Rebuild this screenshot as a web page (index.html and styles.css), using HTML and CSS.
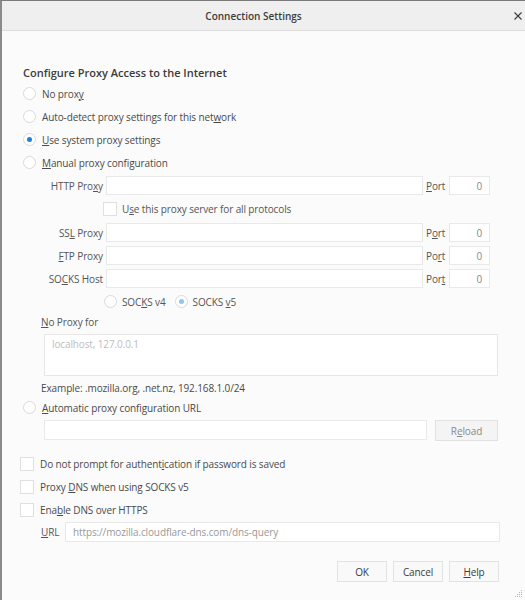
FILE: index.html
```html
<!DOCTYPE html>
<html>
<head>
<meta charset="utf-8">
<link rel="stylesheet" href="styles.css">
</head>
<body>
<div class="frame">
  <div class="titlebar">
    <span class="title">Connection Settings</span>
    <svg class="close" width="8" height="8" viewBox="0 0 8 8"><path d="M0.5 0.5L7.5 7.5M7.5 0.5L0.5 7.5" stroke="#3a3a3a" stroke-width="1.1"/></svg>
  </div>
  <div class="content">
    <div class="heading">Configure Proxy Access to the Internet</div>
    <div class="radio-row"><span class="radio"></span><span>No prox<u>y</u></span></div>
    <div class="radio-row"><span class="radio"></span><span>Auto-detect proxy settings for this net<u>w</u>ork</span></div>
    <div class="radio-row"><span class="radio checked"></span><span><u>U</u>se system proxy settings</span></div>
    <div class="radio-row"><span class="radio"></span><span><u>M</u>anual proxy configuration</span></div>

    <div class="proxy-grid">
      <span class="plabel">HTTP Pro<u>x</u>y</span><span class="input"></span><span class="portlabel"><u>P</u>ort</span><span class="input port">0</span>
      <div class="allproto"><span class="checkbox"></span><span>U<u>s</u>e this proxy server for all protocols</span></div>
      <span class="plabel">SS<u>L</u> Proxy</span><span class="input"></span><span class="portlabel">P<u>o</u>rt</span><span class="input port">0</span>
      <span class="plabel"><u>F</u>TP Proxy</span><span class="input"></span><span class="portlabel">Po<u>r</u>t</span><span class="input port">0</span>
      <span class="plabel">SO<u>C</u>KS Host</span><span class="input"></span><span class="portlabel">Por<u>t</u></span><span class="input port">0</span>
    </div>
    <div class="socks">
      <span class="radio"></span><span class="socks-label">SOC<u>K</u>S v4</span>
      <span class="radio checked disabled"></span><span>SOCKS <u>v</u>5</span>
    </div>
    <div class="noproxy-label"><u>N</u>o Proxy for</div>
    <div class="textarea">localhost, 127.0.0.1</div>
    <div class="example">Example: .mozilla.org, .net.nz, 192.168.1.0/24</div>
    <div class="radio-row auto"><span class="radio"></span><span><u>A</u>utomatic proxy configuration URL</span></div>
    <div class="autourl">
      <span class="input grow"></span>
      <span class="button reload">R<u>e</u>load</span>
    </div>
    <div class="check-row"><span class="checkbox"></span><span>Do not prompt for authent<u>i</u>cation if password is saved</span></div>
    <div class="check-row"><span class="checkbox"></span><span>Proxy <u>D</u>NS when using SOCKS v5</span></div>
    <div class="check-row"><span class="checkbox"></span><span>Ena<u>b</u>le DNS over HTTPS</span></div>
    <div class="doh">
      <span class="doh-label"><u>U</u>RL</span>
      <span class="input grow placeholder">https://mozilla.cloudflare-dns.com/dns-query</span>
    </div>
    <div class="buttons">
      <span class="button">OK</span>
      <span class="button">Cancel</span>
      <span class="button"><u>H</u>elp</span>
    </div>
  </div>
  <svg class="grip" width="8" height="8" viewBox="0 0 8 8"><g fill="#b5b5b5"><rect x="6" y="0" width="1" height="1"/><rect x="4" y="2" width="1" height="1"/><rect x="6" y="2" width="1" height="1"/><rect x="2" y="4" width="1" height="1"/><rect x="4" y="4" width="1" height="1"/><rect x="6" y="4" width="1" height="1"/><rect x="0" y="6" width="1" height="1"/><rect x="2" y="6" width="1" height="1"/><rect x="4" y="6" width="1" height="1"/><rect x="6" y="6" width="1" height="1"/></g></svg>
</div>
</body>
</html>
```

FILE: styles.css
```css
* { box-sizing: border-box; }
html, body { margin: 0; padding: 0; }
body {
  font-family: "Open Sans", "Noto Sans", sans-serif;
  font-size: 10px;
  letter-spacing: -0.12px;
  color: #4a4a4a;
  background: #fbfbfb;
}
u { text-decoration: underline; text-underline-offset: 1px; }
.frame {
  position: relative;
  width: 525px;
  height: 600px;
  border-top: 1px solid #7a7a7a;
  border-left: 2px solid #8a8a8a;
  background: #fbfbfb;
  overflow: hidden;
}
.titlebar {
  height: 30px;
  background: #efefef;
  border-bottom: 1px solid #dcdcdc;
  display: flex;
  align-items: center;
  justify-content: center;
  padding-right: 20px;
  position: relative;
}
.title {
  font-weight: 600;
  font-size: 10px;
  letter-spacing: 0;
  color: #3d3d3d;
}
.close {
  position: absolute;
  right: 3px;
  top: 11px;
}
.content {
  padding: 0 0 0 18px;
}
.heading {
  margin: 34px 0 1px 3px;
  font-size: 11px;
  font-weight: 600;
  letter-spacing: 0;
  color: #3b3b3b;
  line-height: 16px;
}
.radio-row {
  display: flex;
  align-items: center;
  height: 23px;
  margin-left: 3px;
}
.radio {
  width: 13px;
  height: 13px;
  border-radius: 50%;
  border: 1px solid #dadada;
  background: #fff;
  margin-right: 6px;
  flex: none;
  position: relative;
}
.radio.checked::after {
  content: "";
  position: absolute;
  left: 3px; top: 3px;
  width: 5px; height: 5px;
  border-radius: 50%;
  background: #1a82d8;
}
.radio.disabled::after { background: #8ec7ef; }
.proxy-grid {
  display: grid;
  grid-template-columns: 59px 317px 20px 41px;
  grid-template-rows: 19px 20px 19px 19px 19px;
  column-gap: 3px;
  row-gap: 4px;
  align-items: center;
  margin: 2px 0 0 24px;
  color: #555;
}
.plabel { text-align: right; white-space: nowrap; }
.input {
  height: 19px;
  background: #fff;
  border: 1px solid #e9e9e9;
  display: flex;
  align-items: center;
  padding: 0 7px;
}
.input.port { justify-content: flex-end; color: #888; }
.allproto {
  grid-column: 2 / 5;
  display: flex;
  align-items: center;
  height: 20px;
  margin-left: -3px;
}
.checkbox {
  width: 14px;
  height: 14px;
  border: 1px solid #e0e0e0;
  background: #fff;
  flex: none;
  margin-right: 5px;
}
.socks {
  display: flex;
  align-items: center;
  height: 23px;
  margin: 2px 0 0 84px;
  color: #555;
}
.socks .radio { margin-right: 5px; }
.socks-label { margin-right: 9px; }
.noproxy-label {
  margin: 2px 0 0 21px;
  line-height: 15px;
  color: #555;
}
.textarea {
  margin: 4px 0 0 24px;
  width: 454px;
  height: 42px;
  background: #fff;
  border: 1px solid #e6e6e6;
  padding: 2px 7px;
  color: #bdbdbd;
}
.example {
  margin: 5px 0 0 21px;
  line-height: 15px;
  color: #4a4a4a;
}
.autourl {
  display: flex;
  margin: 1px 0 0 24px;
  width: 454px;
  gap: 8px;
}
.autourl .input { height: 20px; }
.grow { flex: 1; }
.button {
  display: flex;
  align-items: center;
  justify-content: center;
  height: 21px;
  width: 50px;
  border: 1px solid #e2e2e2;
  background: #f9f9f9;
  color: #3b3b3b;
}
.reload { width: 63px; background: #f4f4f4; color: #8a8a8a; }
.check-row {
  display: flex;
  align-items: center;
  height: 23px;
}
.autourl + .check-row { margin-top: 11px; }
.check-row .checkbox { margin-right: 6px; }
.doh {
  display: flex;
  align-items: center;
  margin: 1px 0 0 21px;
  width: 459px;
}
.doh-label { width: 24px; color: #555; }
.doh .input { height: 20px; color: #999; }
.buttons {
  display: flex;
  gap: 6px;
  margin: 19px 0 0 317px;
}
.buttons .button { width: 50px; height: 21px; }
.grip { position: absolute; right: 2px; bottom: 2px; }
```
